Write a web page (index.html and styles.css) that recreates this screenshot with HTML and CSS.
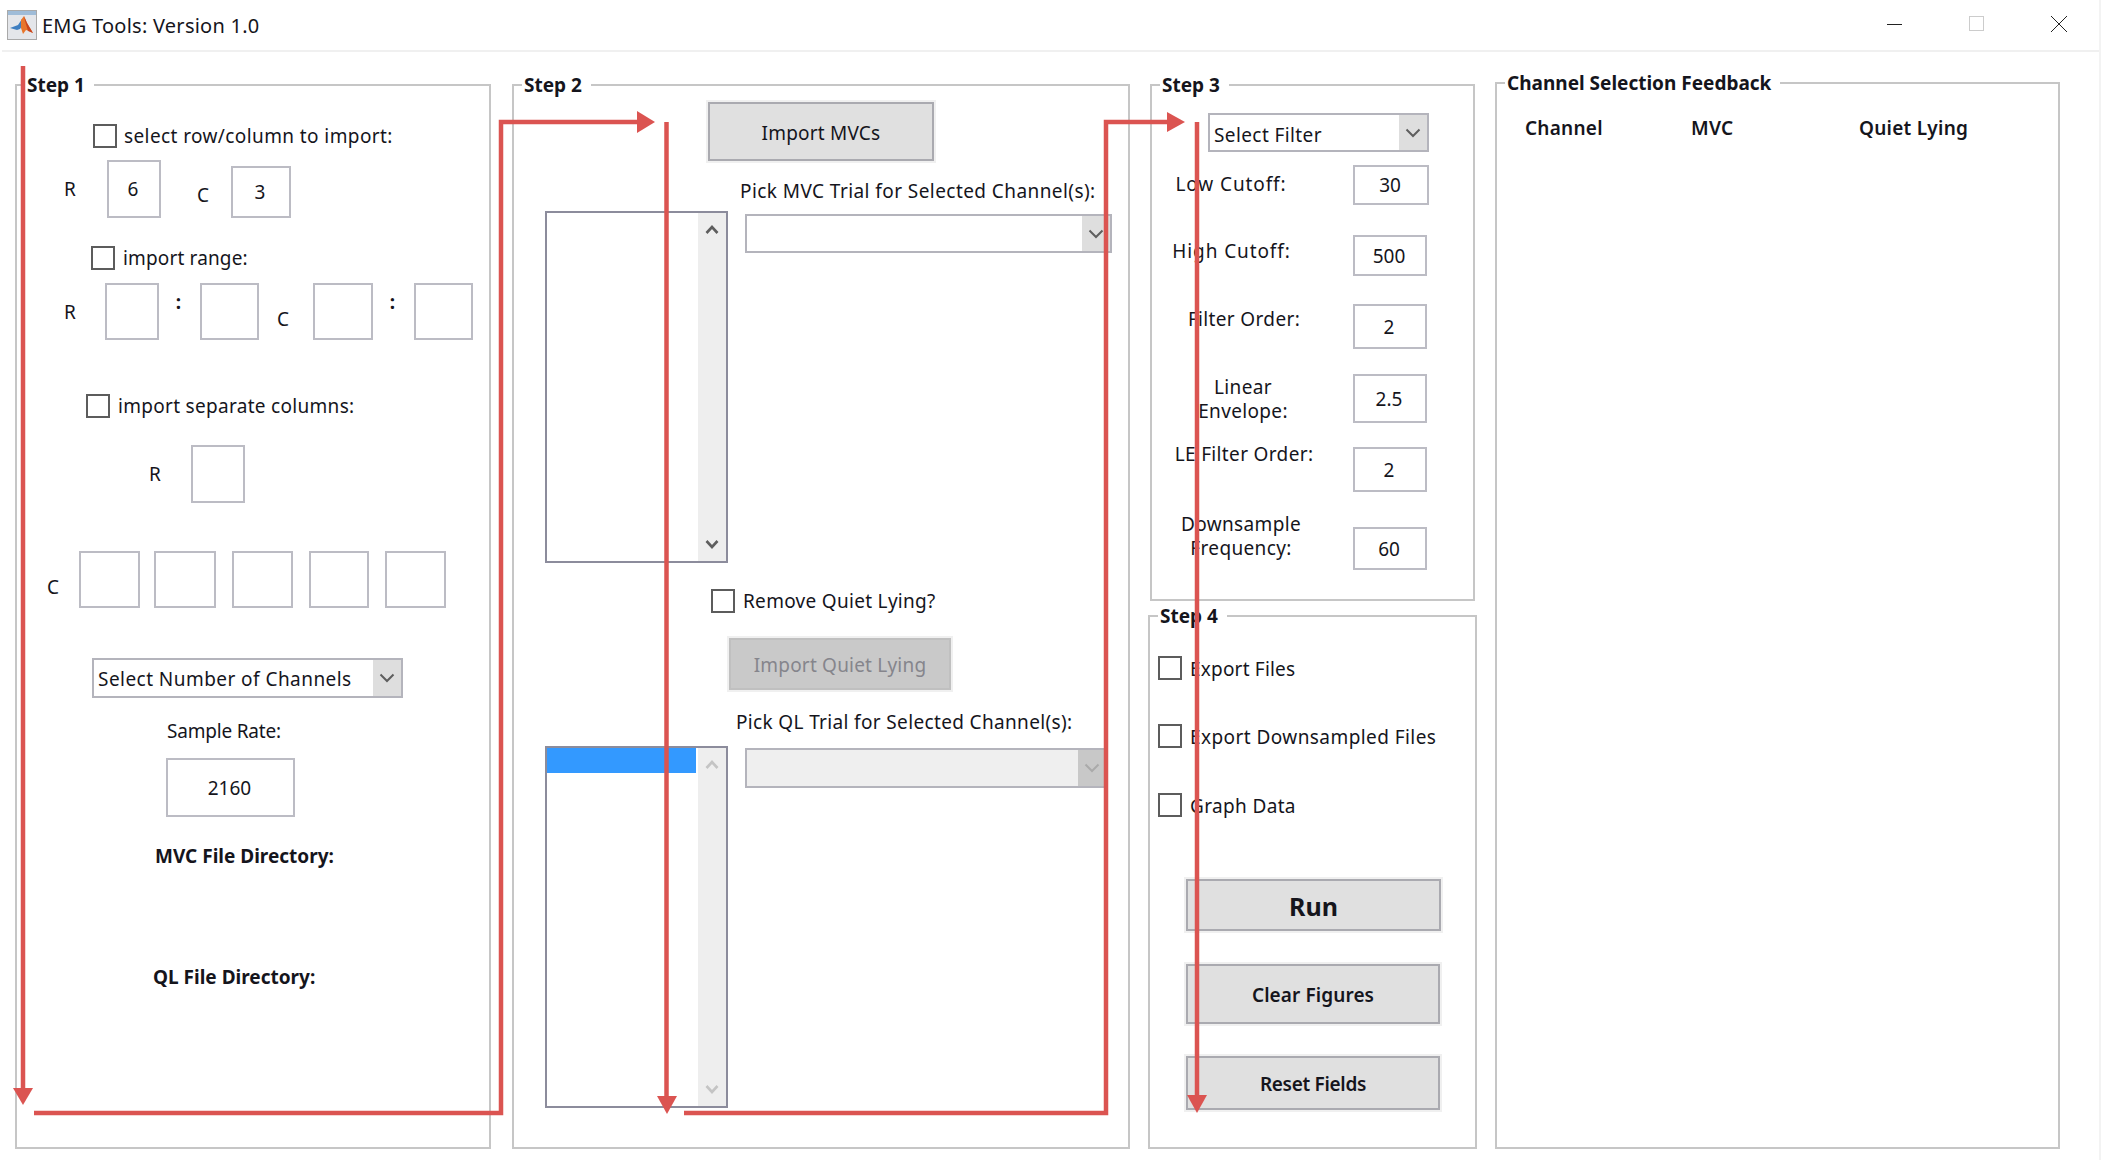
FILE: index.html
```html
<!DOCTYPE html>
<html lang="en">
<head>
<meta charset="utf-8">
<title>EMG Tools: Version 1.0</title>
<link rel="stylesheet" href="styles.css">
</head>
<body>
<div class="window">
  <header class="titlebar">
    <svg class="app-icon" viewBox="0 0 30 30" width="30" height="30">
      <rect x="0.5" y="0.5" width="29" height="29" fill="#e4e6ea" stroke="#a9a9a9"/>
      <rect x="1" y="1" width="28" height="4" fill="#9fbcd8"/>
      <path d="M3 18l8-3 4-6 4 1-6 9-3 1z" fill="#3f7fc1"/>
      <path d="M14 10l3-4 3 7 6 10-4-2-3-1-3 4-2-6z" fill="#e8762b"/>
      <path d="M17 6l3 7 6 10-5-2-3-10z" fill="#c8451e"/>
    </svg>
    <span class="app-title">EMG Tools: Version 1.0</span>
    <div class="win-controls">
      <svg class="win-min" width="16" height="16" viewBox="0 0 16 16"><path d="M0 8.5h15" stroke="#222" fill="none"/></svg>
      <svg class="win-max" width="16" height="16" viewBox="0 0 16 16"><rect x="0.5" y="0.5" width="14" height="14" stroke="#ccc" fill="none"/></svg>
      <svg class="win-close" width="18" height="16" viewBox="0 0 18 16"><path d="M1 0l16 16M17 0L1 16" stroke="#222" fill="none"/></svg>
    </div>
  </header>

  <main class="panels">
    <fieldset class="panel step1">
      <legend class="legend">Step 1</legend>
      <div class="row s1-a"><div class="check"></div><span class="text t-row">select row/column to import:</span></div>
      <div class="row s1-b">
        <span class="text axis r1">R</span>
        <div class="edit e1">6</div>
        <span class="text axis c1">C</span>
        <div class="edit e2">3</div>
      </div>
      <div class="row s1-c"><div class="check"></div><span class="text t-range">import range:</span></div>
      <div class="row s1-d">
        <span class="text axis r2">R</span>
        <div class="edit e3"></div>
        <span class="text colon">:</span>
        <div class="edit e4"></div>
        <span class="text axis c2">C</span>
        <div class="edit e5"></div>
        <span class="text colon">:</span>
        <div class="edit e4"></div>
      </div>
      <div class="row s1-e"><div class="check"></div><span class="text t-sep">import separate columns:</span></div>
      <div class="row s1-f"><span class="text axis r3">R</span><div class="edit e6"></div></div>
      <div class="row s1-g">
        <span class="text axis c3">C</span>
        <div class="edit c-a"></div>
        <div class="edit c-b"></div>
        <div class="edit c-c"></div>
        <div class="edit c-d"></div>
        <div class="edit c-e"></div>
      </div>
      <div class="select sel-channels">
        <span class="text t-channels">Select Number of Channels</span>
        <div class="sel-btn"><svg class="chev" width="16" height="10" viewBox="0 0 16 10"><path d="M1.5 1.5L8 8l6.5-6.5"/></svg></div>
      </div>
      <div class="text t-rate">Sample Rate:</div>
      <div class="edit e-rate">2160</div>
      <div class="text strong t-mvcdir">MVC File Directory:</div>
      <div class="text strong t-qldir">QL File Directory:</div>
    </fieldset>

    <fieldset class="panel step2">
      <legend class="legend">Step 2</legend>
      <button class="btn btn-mvc" type="button">Import MVCs</button>
      <div class="list-row row-a">
        <div class="listbox list-a">
          <div class="list-items"></div>
          <div class="scroll">
            <svg class="chev" width="14" height="10" viewBox="0 0 14 10"><path d="M1.5 8L7 2l5.5 6"/></svg>
            <svg class="chev" width="14" height="10" viewBox="0 0 14 10"><path d="M1.5 2L7 8l5.5-6"/></svg>
          </div>
        </div>
        <div class="list-side">
          <div class="text t-pickmvc">Pick MVC Trial for Selected Channel(s):</div>
          <div class="select sel-mvc">
            <div class="sel-btn"><svg class="chev" width="16" height="10" viewBox="0 0 16 10"><path d="M1.5 1.5L8 8l6.5-6.5"/></svg></div>
          </div>
        </div>
      </div>
      <div class="row s2-remove"><div class="check"></div><span class="text t-remove">Remove Quiet Lying?</span></div>
      <button class="btn btn-ql" type="button" disabled>Import Quiet Lying</button>
      <div class="list-row row-b">
        <div class="listbox list-b">
          <div class="list-items"><div class="list-selected"></div></div>
          <div class="scroll scroll-off">
            <svg class="chev" width="14" height="10" viewBox="0 0 14 10"><path d="M1.5 8L7 2l5.5 6"/></svg>
            <svg class="chev" width="14" height="10" viewBox="0 0 14 10"><path d="M1.5 2L7 8l5.5-6"/></svg>
          </div>
        </div>
        <div class="list-side">
          <div class="text t-pickql">Pick QL Trial for Selected Channel(s):</div>
          <div class="select sel-ql">
            <div class="sel-btn"><svg class="chev" width="16" height="10" viewBox="0 0 16 10"><path d="M1.5 1.5L8 8l6.5-6.5"/></svg></div>
          </div>
        </div>
      </div>
    </fieldset>

    <div class="stack">
      <fieldset class="panel step3">
        <legend class="legend">Step 3</legend>
        <div class="select sel-filter">
          <span class="text t-filter">Select Filter</span>
          <div class="sel-btn"><svg class="chev" width="16" height="10" viewBox="0 0 16 10"><path d="M1.5 1.5L8 8l6.5-6.5"/></svg></div>
        </div>
        <div class="param p1"><div class="text l1">Low Cutoff:</div><div class="edit v1">30</div></div>
        <div class="param p2"><div class="text l2">High Cutoff:</div><div class="edit v2">500</div></div>
        <div class="param p3"><div class="text l3">Filter Order:</div><div class="edit v2">2</div></div>
        <div class="param p4"><div class="text l4">Linear<br>Envelope:</div><div class="edit v2">2.5</div></div>
        <div class="param p5"><div class="text l5">LE Filter Order:</div><div class="edit v2">2</div></div>
        <div class="param p6"><div class="text l6">Downsample<br>Frequency:</div><div class="edit v2">60</div></div>
      </fieldset>
      <fieldset class="panel step4">
        <legend class="legend">Step 4</legend>
        <div class="row s4-a"><div class="check"></div><span class="text t-export">Export Files</span></div>
        <div class="row s4-b"><div class="check"></div><span class="text t-down">Export Downsampled Files</span></div>
        <div class="row s4-c"><div class="check"></div><span class="text t-graph">Graph Data</span></div>
        <button class="btn btn-run" type="button">Run</button>
        <button class="btn btn-clear" type="button">Clear Figures</button>
        <button class="btn btn-reset" type="button">Reset Fields</button>
      </fieldset>
    </div>

    <fieldset class="panel feedback">
      <legend class="legend">Channel Selection Feedback</legend>
      <div class="feedback-head">
        <span class="text head h-ch">Channel</span>
        <span class="text head h-mvc">MVC</span>
        <span class="text head h-ql">Quiet Lying</span>
      </div>
    </fieldset>
  </main>

  <svg class="arrows" width="2109" height="1166" viewBox="0 0 2109 1166">
    <g fill="none" stroke="#db5451" stroke-width="4.5">
      <path d="M23 66V1090"/>
      <path d="M34 1113H501V122H640"/>
      <path d="M666.5 122V1098"/>
      <path d="M684 1113H1106V122H1170"/>
      <path d="M1197 122V1098"/>
    </g>
    <g fill="#db5451">
      <path d="M13 1088H33L23 1105z"/>
      <path d="M637 111L655 122 637 133z"/>
      <path d="M657 1096H677L667 1114z"/>
      <path d="M1167 112L1185 122 1167 132z"/>
      <path d="M1187 1095H1207L1197 1113z"/>
    </g>
  </svg>
</div>
</body>
</html>
```
FILE: styles.css
```css
* { box-sizing: border-box; }
html, body { margin: 0; padding: 0; background: #fff; }
body { font-family: "Noto Sans", "Open Sans", sans-serif; color: #15151c; overflow: hidden; }

.window { position: relative; width: 2101px; height: 1160px; border-right: 2px solid #f3f3f3; }

/* title bar */
.titlebar { display: flex; align-items: center; height: 52px; margin-left: 2px; padding-left: 5px; border-bottom: 2px solid #f0f0f0; }
.app-icon { flex: none; }
.app-title { margin-left: 5px; font-size: 20px; letter-spacing: 0.25px; white-space: nowrap; }
.win-controls { display: flex; align-items: center; margin-left: auto; padding-right: 31px; padding-bottom: 2px; }
.win-min { margin-right: 66px; }
.win-max { margin-right: 65px; }

/* panels */
.panels { display: flex; align-items: flex-start; padding-left: 15px; }
.panel { margin: 0; padding: 0; border: 2px solid #c6c6c6; min-width: 0; }
.legend { margin-left: 8px; padding: 0 9px 0 2px; height: 24px; line-height: 24px; font-size: 19px; font-weight: 700; white-space: nowrap; }
.step1 { width: 476px; height: 1076px; margin-top: 21px; }
.step2 { width: 618px; height: 1076px; margin-top: 21px; margin-left: 21px; }
.stack { width: 329px; margin-left: 18px; margin-top: 21px; }
.step3 { width: 325px; height: 528px; margin-left: 2px; }
.step4 { width: 329px; height: 545px; margin-top: 3px; }
.feedback { width: 565px; height: 1078px; margin-top: 19px; margin-left: 18px; }

/* text */
.text { font-size: 19px; line-height: 24px; letter-spacing: 0.35px; white-space: nowrap; }
.strong { font-weight: 700; letter-spacing: 0; }
.axis { flex: none; width: 12px; text-align: center; }
.row { display: flex; align-items: center; }

.check { flex: none; width: 24px; height: 24px; border: 2px solid #5c5c5c; background: #fff; }

.edit { display: flex; flex: none; align-items: center; justify-content: center; padding-right: 2px; border: 2px solid #bcbcc4; background: #fff; font-size: 19px; }

.select { display: flex; align-items: center; justify-content: space-between; border: 2px solid #b4b4bc; background: #fff; }
.sel-btn { display: flex; align-items: center; justify-content: center; align-self: stretch; margin-left: auto; background: #dedede; width: 28px; }
.chev path { fill: none; stroke: #5e5e5e; stroke-width: 2; }

.btn { display: block; padding: 2px 0 0; border: 2px solid #aaaab0; background: #e0e0e0; color: #15151c; font-family: inherit; font-size: 19px; letter-spacing: 0.2px; outline: 2px solid #f0f0f0; }

/* step 1 */
.s1-a { margin-top: 27px; padding-left: 76px; gap: 7px; }
.t-row { letter-spacing: 0.4px; }
.s1-b { margin-top: 12px; height: 58px; padding-left: 47px; }
.r1 { margin-right: 31px; }
.e1 { width: 54px; height: 58px; }
.c1 { margin: 12px 22px 0 36px; }
.e2 { width: 60px; height: 52px; align-self: flex-end; }
.s1-c { margin-top: 28px; padding-left: 74px; gap: 7px; }
.t-range { margin-left: 1px; letter-spacing: 0.15px; }
.s1-d { margin-top: 13px; height: 57px; padding-left: 47px; }
.r2 { margin-right: 29px; }
.e3 { width: 54px; height: 57px; }
.e4 { width: 59px; height: 57px; }
.e5 { width: 60px; height: 57px; }
.colon { flex: none; width: 39px; margin: 0 2px 20px 0; text-align: center; font-weight: 700; }
.c2 { margin: 14px 24px 0 18px; }
.s1-e { margin-top: 54px; padding-left: 69px; gap: 7px; }
.t-sep { margin-left: 1px; letter-spacing: 0.3px; }
.s1-f { margin-top: 27px; height: 58px; padding-left: 132px; }
.r3 { margin-right: 30px; }
.e6 { width: 54px; height: 58px; }
.s1-g { margin-top: 48px; height: 57px; padding-left: 30px; }
.c3 { margin: 15px 20px 0 0; }
.c-a, .c-c, .c-e { width: 61px; height: 57px; }
.c-b { width: 62px; height: 57px; margin: 0 16px 0 14px; }
.c-c { margin-right: 16px; }
.c-d { width: 60px; height: 57px; margin-right: 16px; }
.sel-channels { width: 311px; height: 40px; margin: 50px 0 0 75px; }
.t-channels { margin: 2px 0 0 4px; letter-spacing: 0.45px; }
.t-rate { margin: 21px 0 0 150px; letter-spacing: -0.2px; }
.e-rate { width: 129px; height: 59px; margin: 15px 0 0 149px; }
.t-mvcdir { margin: 27px 0 0 138px; }
.t-qldir { margin: 97px 0 0 136px; }

/* step 2 */
.btn-mvc { width: 226px; height: 59px; margin: 5px 0 0 194px; }
.list-row { display: flex; align-items: flex-start; padding-left: 31px; }
.listbox { display: flex; flex: none; width: 183px; border: 2px solid #8c8c9c; background: #fff; }
.list-a { height: 352px; margin-top: 50px; }
.list-b { height: 362px; margin-top: 56px; }
.list-items { flex: 1; }
.list-selected { width: 149px; height: 25px; background: #3399ff; }
.scroll { display: flex; flex: none; flex-direction: column; justify-content: space-between; align-items: center; width: 28px; padding: 12px 0; background: #eeeeee; }
.scroll .chev path { stroke-width: 2.6; }
.scroll-off .chev path { stroke: #c4c4c4; }
.t-pickmvc { margin: 18px 0 0 12px; letter-spacing: 0.43px; }
.sel-mvc { width: 367px; height: 39px; margin: 11px 0 0 17px; }
.t-remove { letter-spacing: 0.3px; }
.t-export { margin-top: 2px; letter-spacing: 0.2px; }
.t-down { margin-top: 2px; letter-spacing: 0.43px; }
.t-graph { margin-top: 2px; }
.s2-remove { margin-top: 26px; padding-left: 197px; gap: 8px; }
.btn-ql { width: 222px; height: 52px; margin: 25px 0 0 215px; border-color: #c0c0c0; background: #c9c9c9; color: #85858c; }
.t-pickql { margin: 20px 0 0 8px; }
.sel-ql { width: 363px; height: 40px; margin: 14px 0 0 17px; background: #efefef; border-color: #b4b4bc; }
.sel-ql .sel-btn { background: #c8c8c8; }
.sel-ql .chev path { stroke: #aaaaaa; }

/* step 3 */
.sel-filter { width: 221px; height: 39px; margin: 16px 0 0 56px; }
.t-filter { margin: 4px 0 0 4px; letter-spacing: 0.4px; }
.param { display: flex; align-items: flex-start; justify-content: space-between; width: 275px; }
.param .text { text-align: center; }
.p1 { margin-top: 13px; }
.p2 { margin-top: 30px; }
.p3 { margin-top: 28px; }
.p4 { margin-top: 25px; }
.p5 { margin-top: 24px; }
.p6 { margin-top: 35px; }
.l1 { width: 158px; margin-top: 7px; letter-spacing: 0.9px; }
.l2 { width: 159px; margin-top: 4px; letter-spacing: 0.9px; }
.l3 { width: 184px; margin-top: 3px; }
.l4 { width: 182px; margin-top: 1px; }
.l5 { width: 184px; margin-top: -5px; }
.l6 { width: 178px; margin-top: -15px; }
.v1 { width: 76px; height: 40px; margin-right: -2px; }
.v2 { width: 74px; }
.p2 .v2 { height: 41px; }
.p3 .v2, .p5 .v2 { height: 45px; }
.p4 .v2 { height: 49px; }
.p6 .v2 { height: 43px; }

/* step 4 */
.s4-a, .s4-b, .s4-c { height: 24px; padding-left: 8px; gap: 8px; }
.s4-a { margin-top: 28px; }
.s4-b { margin-top: 44px; }
.s4-c { margin-top: 45px; }
.btn-run { width: 255px; height: 52px; margin: 62px 0 0 36px; font-size: 25px; font-weight: 700; letter-spacing: 0; }
.btn-clear { width: 254px; height: 60px; margin: 33px 0 0 36px; font-weight: 600; letter-spacing: 0.1px; }
.btn-reset { width: 254px; height: 54px; margin: 32px 0 0 36px; font-weight: 600; letter-spacing: -0.3px; }

/* feedback */
.feedback-head { display: flex; margin-top: 21px; padding-left: 28px; }
.head { flex: none; font-weight: 600; letter-spacing: 0.25px; }
.h-ch { width: 166px; }
.h-mvc { width: 168px; }

/* overlay arrows */
.arrows { position: absolute; left: 0; top: 0; pointer-events: none; }
```
